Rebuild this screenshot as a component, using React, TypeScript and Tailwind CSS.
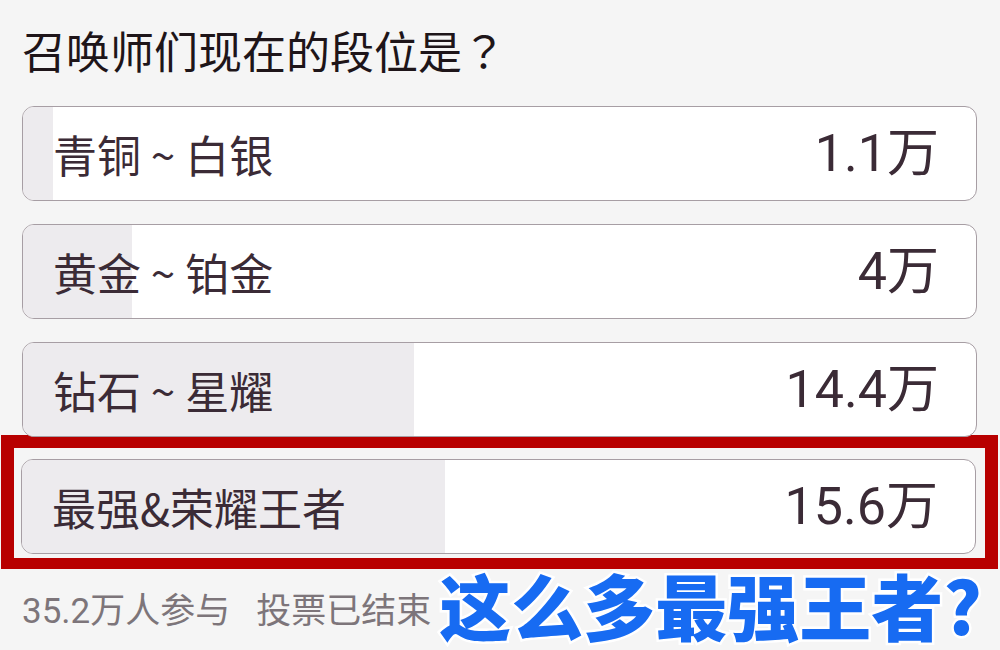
import React from "react";

const options = [
  { label: "青铜 ~ 白银", count: 1.1, text: "1.1万" },
  { label: "黄金 ~ 铂金", count: 4, text: "4万" },
  { label: "钻石 ~ 星耀", count: 14.4, text: "14.4万" },
];
const top = { label: "最强&荣耀王者", count: 15.6, text: "15.6万" };
const total = 35.2;

function Option({ label, count, text }: { label: string; count: number; text: string }) {
  const w = (count / total) * 955;
  return (
    <div className="relative h-[95px] w-[955px] rounded-[12px] border-[1.5px] border-[#a79ea4] bg-white overflow-hidden flex items-center justify-between pl-[30px] pr-[37px] text-[#3b2b36]">
      <div className="absolute left-0 top-0 bottom-0 bg-[#edebee]" style={{ width: w }} />
      <span className="relative text-[44px] leading-none font-['Noto_Sans_CJK_SC',sans-serif]">{label}</span>
      <span className="relative text-[52px] leading-none font-['Roboto','Noto_Sans_CJK_SC',sans-serif]">{text}</span>
    </div>
  );
}

export default function App() {
  return (
    <div className="w-[1000px] h-[650px] bg-[#f5f5f5] overflow-hidden">
      <div className="h-[106px] pl-[22px] pt-[24px] text-[44px] leading-[52px] text-[#1e1519] font-['Noto_Sans_CJK_SC',sans-serif]">
        召唤师们现在的段位是<span className="font-['Noto_Sans_CJK_JP',sans-serif]">？</span>
      </div>
      <div className="flex flex-col gap-[23px] pl-[22px]">
        {options.map((o) => (
          <Option key={o.label} {...o} />
        ))}
      </div>
      <div className="mt-[-2px] ml-[1px] w-[997px] border-[13px] border-b-[11px] border-[#b80000] pt-[11px] pb-[4px] pl-[7px]">
        <Option {...top} />
      </div>
      <div className="flex items-center pl-[22px] h-[78px] mt-[-4px] whitespace-nowrap">
        <div className="flex gap-[26px] pt-[16px] text-[35px] text-[#7d757a] font-['Roboto','Noto_Sans_CJK_SC',sans-serif]">
          <span>35.2万人参与</span>
          <span>投票已结束</span>
        </div>
        <span className="ml-[8px] text-[72px] font-black text-[#176bf2] leading-none [paint-order:stroke_fill] [-webkit-text-stroke:5px_white] font-['Noto_Sans_CJK_SC',sans-serif]">
          这么多最强王者?
        </span>
      </div>
    </div>
  );
}
